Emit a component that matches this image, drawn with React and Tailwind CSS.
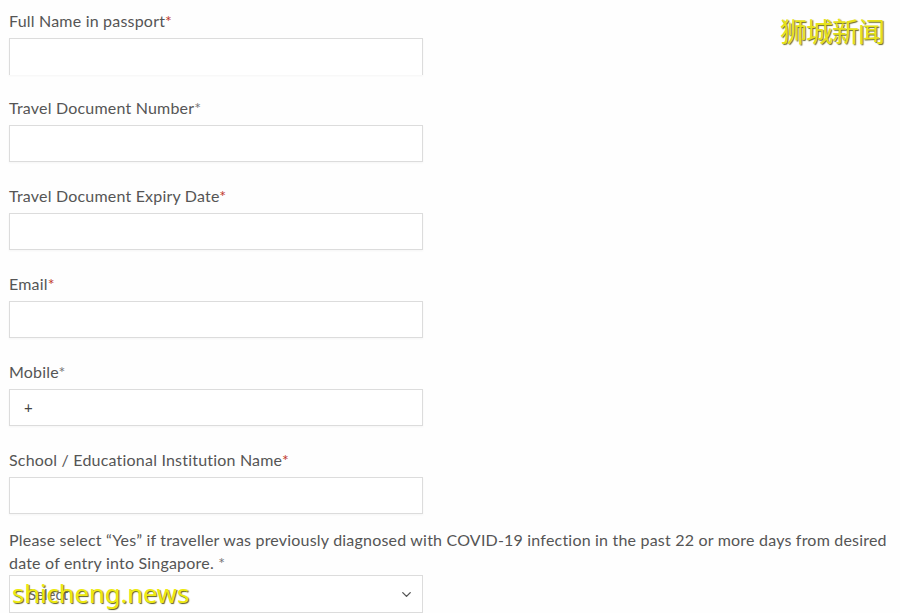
import { ChevronDown } from "lucide-react";

const FIELDS = [
  { label: "Full Name in passport", star: "red", open: true },
  { label: "Travel Document Number", star: "gray" },
  { label: "Travel Document Expiry Date", star: "red" },
  { label: "Email", star: "red" },
  { label: "Mobile", star: "gray", prefix: "+" },
  { label: "School / Educational Institution Name", star: "red" },
];

function Star({ tone }) {
  return (
    <span className={tone === "red" ? "text-[#c0392b]" : "text-[#777]"}>*</span>
  );
}

function Field({ label, star, prefix, open }) {
  return (
    <div className={open ? "mb-[22px]" : "mb-[23px]"}>
      <div className="mb-[6px] text-[16px] leading-[22px] tracking-[0.2px] text-[#555]">
        {label}
        <Star tone={star} />
      </div>
      <div
        className={`flex h-[37px] w-[414px] items-center border border-[#dcdcdc] bg-white px-[14px] text-[15px] text-[#444] shadow-[0_1px_2px_rgba(0,0,0,0.04)] ${
          open ? "border-b-0" : ""
        }`}
      >
        {prefix}
      </div>
    </div>
  );
}

export default function App() {
  return (
    <div className="relative h-[613px] w-[900px] overflow-hidden bg-[#fefefe] px-[9px] pt-[10px] font-['Lato','Liberation_Sans',sans-serif]">
      {FIELDS.map((f) => (
        <Field key={f.label} {...f} />
      ))}

      <div className="-mt-[9px] text-[16px] leading-[23px] tracking-[0.2px] text-[#555]">
        Please select &ldquo;Yes&rdquo; if traveller was previously diagnosed with COVID-19 infection in the past 22 or more
        days from desired date of entry into Singapore. <Star tone="gray" />
      </div>
      <div className="mt-[1px] flex h-[38px] w-[414px] items-center justify-between border border-[#dcdcdc] bg-white pl-[18px] pr-[8px] text-[15px] text-[#666]">
        <span>Select</span>
        <ChevronDown size={15} strokeWidth={2.2} className="text-[#555]" />
      </div>

      <div className="absolute left-[780px] top-[17px] text-[27px] leading-none tracking-[-1px] text-[#e6e21a] [text-shadow:1px_1px_1px_#6b6b2a] font-['Noto_Sans_CJK_SC',sans-serif]">
        狮城新闻
      </div>
      <div className="absolute left-[12px] top-[577px] text-[25.5px] leading-[32px] text-[#eeea10] [text-shadow:1px_1px_1px_#5e5e20] font-['Noto_Sans','DejaVu_Sans',sans-serif]">
        shicheng.news
      </div>
    </div>
  );
}
